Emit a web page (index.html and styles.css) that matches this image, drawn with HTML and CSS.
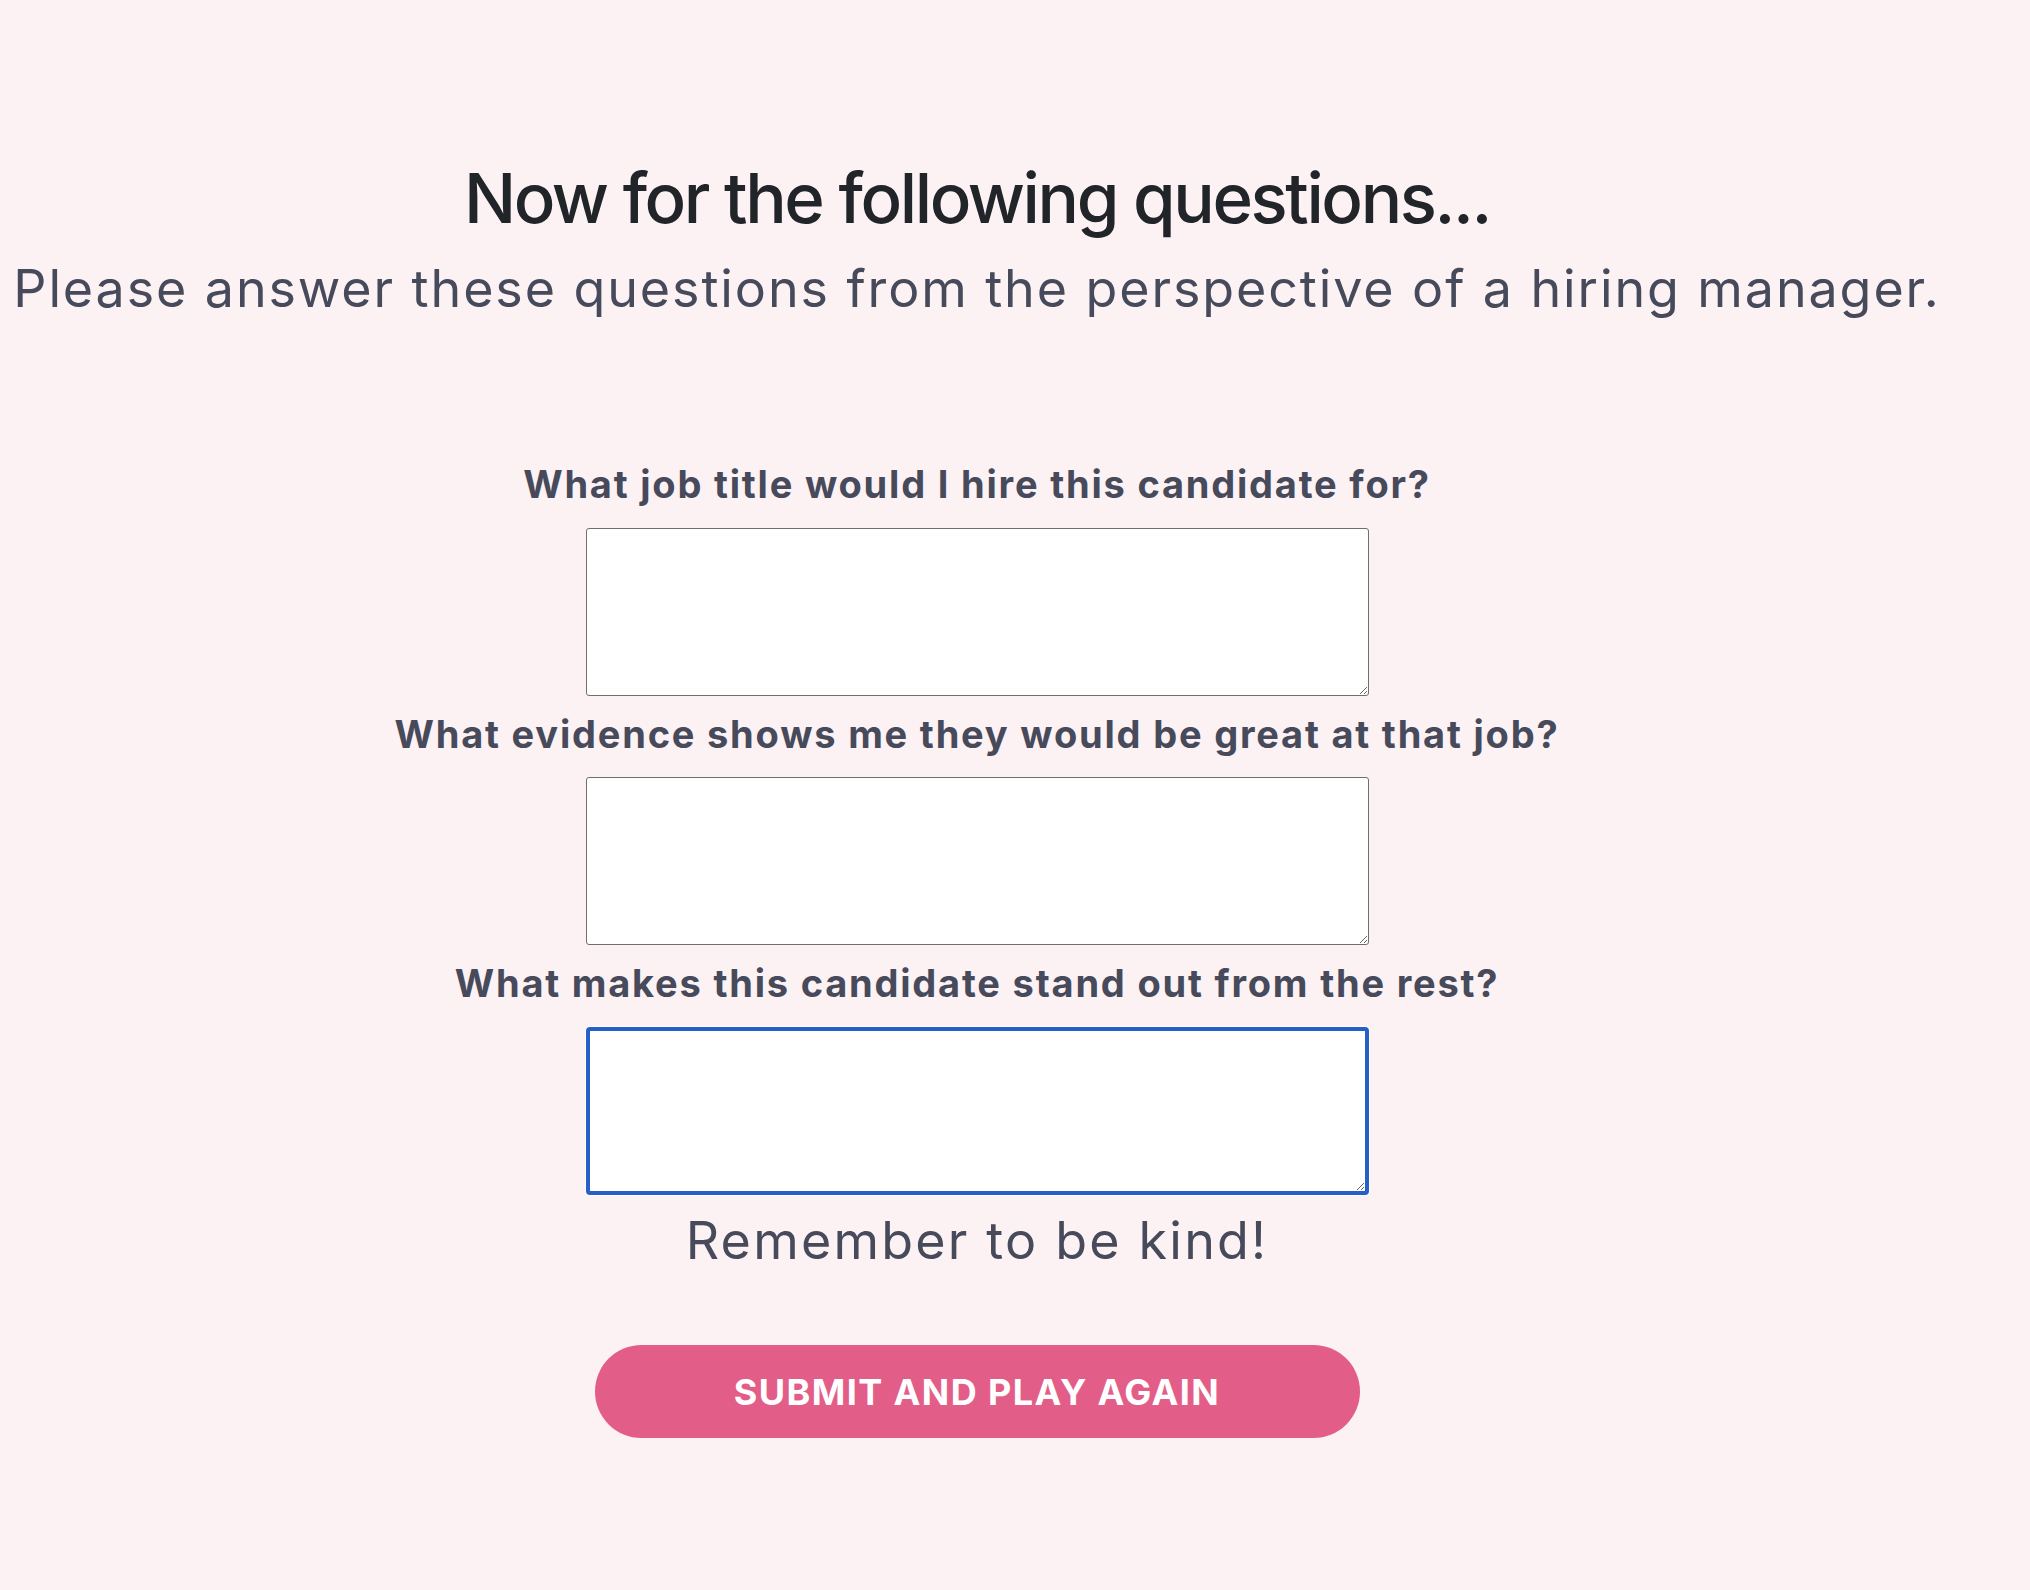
FILE: index.html
```html
<!DOCTYPE html>
<html lang="en">
<head>
<meta charset="utf-8">
<title>Questions</title>
<link rel="stylesheet" href="styles.css">
</head>
<body>
<main class="page">
  <h2 class="title">Now for the following questions...</h2>
  <p class="subtitle">Please answer these questions from the perspective of a hiring manager.</p>
  <form class="qform">
    <label class="q-label" for="q1">What job title would I hire this candidate for?</label>
    <textarea id="q1" class="q-input"></textarea>
    <label class="q-label" for="q2">What evidence shows me they would be great at that job?</label>
    <textarea id="q2" class="q-input"></textarea>
    <label class="q-label" for="q3">What makes this candidate stand out from the rest?</label>
    <textarea id="q3" class="q-input q-input--focus"></textarea>
    <p class="reminder">Remember to be kind!</p>
    <button type="button" class="submit">Submit and play again</button>
  </form>
</main>
</body>
</html>
```

FILE: styles.css
```css
html, body {
  margin: 0;
  padding: 0;
  background: #fcf1f3;
}

body {
  font-family: Inter, "Open Sans", "DejaVu Sans", sans-serif;
  min-height: 1590px;
}

.page {
  width: 1954px;
  display: flex;
  flex-direction: column;
  align-items: center;
  padding-top: 157px;
  box-sizing: border-box;
}

.title {
  margin: 0;
  font-size: 69px;
  line-height: 1.2;
  font-weight: 500;
  color: #212529;
  letter-spacing: -2.4px;
}

.subtitle {
  margin: 18px 0 0;
  font-size: 52px;
  line-height: 1.2;
  font-weight: 400;
  color: #464a5b;
  letter-spacing: 1.9px;
}

.qform {
  margin-top: 142px;
  display: flex;
  flex-direction: column;
  align-items: center;
}

.q-label {
  display: block;
  margin-top: 16px;
  font-size: 38px;
  line-height: 1.2;
  font-weight: 700;
  color: #464a5b;
  letter-spacing: 1.8px;
}

.q-label:first-child {
  margin-top: 0;
}

.q-input {
  display: block;
  margin-top: 20px;
  width: 783px;
  height: 168px;
  box-sizing: border-box;
  border: 1px solid #6e6e6e;
  border-radius: 3px;
  background: #ffffff;
  resize: both;
  outline: none;
}

.q-input--focus {
  border: 4px solid #2660c6;
  border-radius: 4px;
  box-shadow: 0 0 0 1px #ffffff;
}

.reminder {
  margin: 15px 0 0;
  font-size: 52px;
  line-height: 1.2;
  font-weight: 400;
  color: #464a5b;
  letter-spacing: 2.2px;
}

.submit {
  margin-top: 73px;
  width: 765px;
  height: 93px;
  border: none;
  border-radius: 47px;
  background: #e25e88;
  color: #ffffff;
  font-family: Inter, "Open Sans", "DejaVu Sans", sans-serif;
  font-size: 36px;
  font-weight: 700;
  letter-spacing: 1.4px;
  text-transform: uppercase;
  cursor: pointer;
}
```
